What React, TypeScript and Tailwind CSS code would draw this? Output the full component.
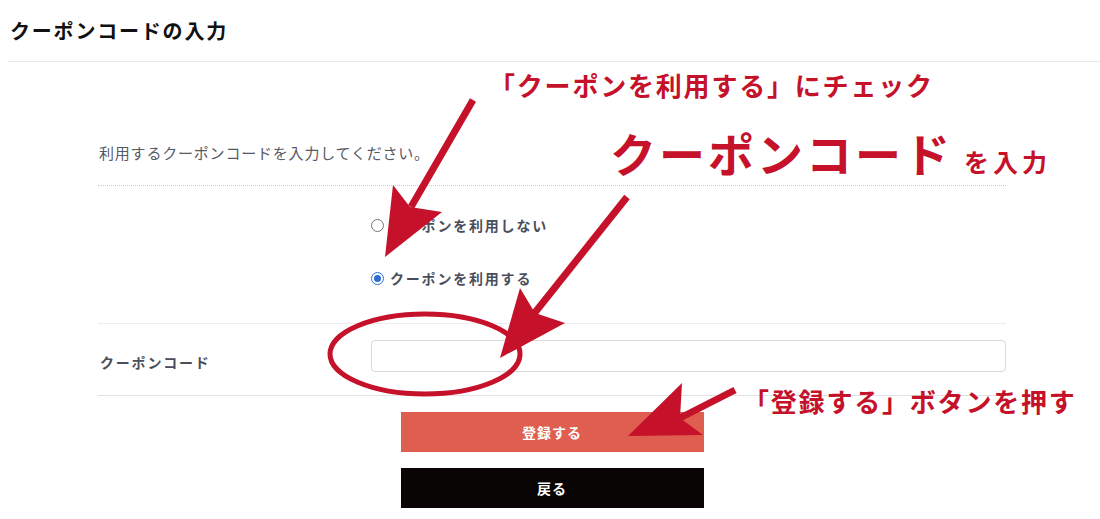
import React from "react";

const jp = "font-['Noto_Sans_CJK_JP','Noto_Sans',sans-serif]";

function Radio({ checked, label }: { checked?: boolean; label: string }) {
  return (
    <label className="flex items-center h-[24px] gap-[6px]">
      {checked ? (
        <span className="w-[13px] h-[13px] rounded-full border border-[#2f6fd0] bg-white flex items-center justify-center">
          <span className="w-[7px] h-[7px] rounded-full bg-[#2f6fd0]"></span>
        </span>
      ) : (
        <span className="w-[13px] h-[13px] rounded-full border border-[#767676] bg-white"></span>
      )}
      <span className="text-[14px] font-bold tracking-[1.8px] text-[#4a4e5c]">{label}</span>
    </label>
  );
}

export default function App() {
  return (
    <main className={`relative w-[1100px] h-[519px] bg-white overflow-hidden ${jp}`}>
      {/* Header */}
      <div className="h-[61px] flex items-center pl-[10px]">
        <h1 className="text-[20px] font-bold tracking-[1.8px] text-[#111]">クーポンコードの入力</h1>
      </div>
      <div className="ml-[8px] border-b border-[#e6e6e6]"></div>

      {/* Form */}
      <div className="ml-[98px] w-[908px]">
        <p className="pt-[80px] pb-[21px] leading-[22px] pl-[1px] text-[15px] tracking-[0.8px] text-[#555a66] border-b border-dotted border-[#c8c8c8]">
          利用するクーポンコードを入力してください。
        </p>

        <div className="pl-[273px] pt-[27px] pb-[33px] flex flex-col gap-[29px] border-b border-[#ececec]">
          <Radio label="クーポンを利用しない" />
          <Radio checked label="クーポンを利用する" />
        </div>

        <div className="flex items-start pt-[16px] pb-[23px] border-b border-[#e2e2e2]">
          <div className="w-[273px] h-[32px] pl-[2px] pt-[12px] leading-[20px] text-[14px] font-bold tracking-[1.8px] text-[#4a4e5c]">
            クーポンコード
          </div>
          <input
            type="text"
            className="flex-1 h-[32px] border border-[#d9d9d9] rounded-[4px] px-2 outline-none"
          />
        </div>

        <div className="flex flex-col items-center gap-[16px] pt-[16px]">
          <button className="w-[303px] h-[40px] bg-[#e05e50] text-white text-[14px] font-bold tracking-[1px]">
            登録する
          </button>
          <button className="w-[303px] h-[40px] bg-[#0a0505] text-white text-[14px] font-bold tracking-[1px]">
            戻る
          </button>
        </div>
      </div>

      {/* Annotations */}
      <svg className="absolute inset-0 pointer-events-none" width="1100" height="519" viewBox="0 0 1100 519">
        <g fill="#c5112a" stroke="#c5112a">
          <line x1="473" y1="100" x2="411" y2="207" strokeWidth="7" />
          <polygon points="385,257 393,185 410,207 442,212" stroke="none" />
          <line x1="627" y1="197" x2="533" y2="315" strokeWidth="7" />
          <polygon points="500,358 520,288 535,313 565,323" stroke="none" />
          <line x1="735" y1="390" x2="680" y2="418" strokeWidth="7" />
          <polygon points="628,436 682,383 680,418 703,435" stroke="none" />
          <ellipse cx="425" cy="354" rx="95" ry="40" fill="none" strokeWidth="5" />
        </g>
      </svg>

      <div className="absolute left-[489px] top-[68px] text-[26px] leading-[34px] font-bold tracking-[1.8px] text-[#c5112a]">
        「クーポンを利用する」にチェック
      </div>
      <div className="absolute left-[610px] top-[122px] flex items-baseline text-[#c5112a] font-bold">
        <span className="text-[46px] leading-[60px] tracking-[3px]">クーポンコード</span>
        <span className="ml-[11px] text-[25px] tracking-[4px]">を入力</span>
      </div>
      <div className="absolute left-[743px] top-[384px] text-[26px] leading-[34px] font-bold tracking-[1.8px] text-[#c5112a]">
        「登録する」ボタンを押す
      </div>
    </main>
  );
}
